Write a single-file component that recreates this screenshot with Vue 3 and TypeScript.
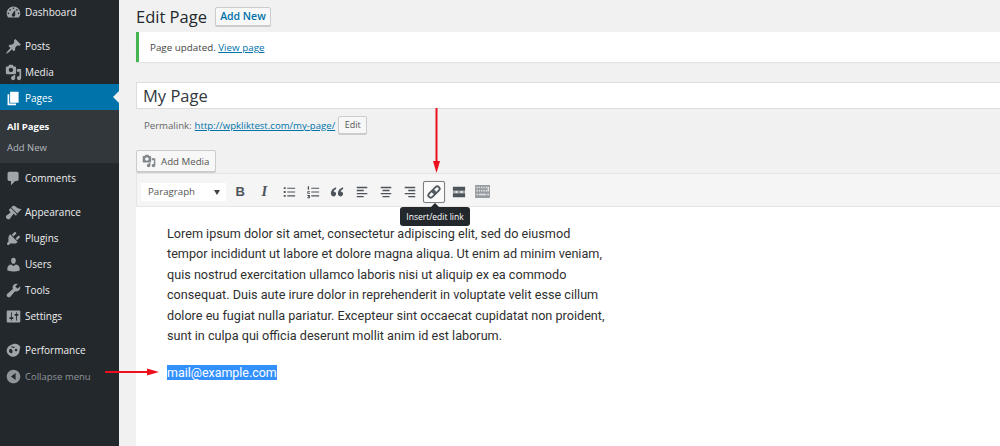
<script setup lang="ts">
interface MenuItem { label: string; path: string }
const P = {
  dash: 'M3.76 16h12.48c1.1-1.37 1.76-3.11 1.76-5 0-4.42-3.58-8-8-8s-8 3.58-8 8c0 1.89.66 3.63 1.76 5zM10 4c.55 0 1 .45 1 1s-.45 1-1 1-1-.45-1-1 .45-1 1-1zM6 6c.55 0 1 .45 1 1s-.45 1-1 1-1-.45-1-1 .45-1 1-1zm8 0c.55 0 1 .45 1 1s-.45 1-1 1-1-.45-1-1 .45-1 1-1zm-5.37 5.55L12 7v6c0 1.1-.9 2-2 2s-2-.9-2-2c0-.57.24-1.08.63-1.45zM4 10c.55 0 1 .45 1 1s-.45 1-1 1-1-.45-1-1 .45-1 1-1zm12 0c.55 0 1 .45 1 1s-.45 1-1 1-1-.45-1-1 .45-1 1-1z',
  post: 'M10.44 3.02l1.82-1.82 6.36 6.35-1.83 1.82c-1.05-.68-2.48-.57-3.41.36l-.75.75c-.92.93-1.04 2.35-.35 3.41l-1.83 1.82-2.41-2.41-2.8 2.79c-.42.42-3.38 2.71-3.8 2.29s1.86-3.39 2.28-3.81l2.79-2.79L4.1 9.36l1.83-1.82c1.05.69 2.48.57 3.4-.36l.75-.75c.93-.92 1.05-2.35.36-3.41z',
  media: 'M13 11V4c0-.55-.45-1-1-1h-1.67L9 1H5L3.67 3H2c-.55 0-1 .45-1 1v7c0 .55.45 1 1 1h10c.55 0 1-.45 1-1zM7 4.5c1.38 0 2.5 1.12 2.5 2.5S8.38 9.5 7 9.5 4.5 8.38 4.5 7 5.62 4.5 7 4.5zM14 6h5v10.5c0 1.38-1.12 2.5-2.5 2.5S14 17.88 14 16.5s1.12-2.5 2.5-2.5c.17 0 .34.02.5.05V9h-3V6zm-4 8.05V13h2v3.5c0 1.38-1.12 2.5-2.5 2.5S7 17.88 7 16.5 8.12 14 9.5 14c.17 0 .34.02.5.05z',
  page: 'M6 15V2h10v13H6zm-1 1h8v2H3V5h2v11z',
  comment: 'M5 2h9c1.1 0 2 .9 2 2v7c0 1.1-.9 2-2 2h-2l-5 5v-5H5c-1.1 0-2-.9-2-2V4c0-1.1.9-2 2-2z',
  appearance: 'M14.48 11.06L7.41 3.99l1.5-1.5c.5-.56 2.3-.47 3.51.32 1.21.8 1.43 1.28 2.91 2.1 1.18.64 2.45 1.26 4.45.85zm-.71.71L6.7 4.7 4.93 6.47c-.39.39-.39 1.02 0 1.41l1.06 1.06c.39.39.39 1.03 0 1.42-.6.6-1.43 1.11-2.21 1.69-.35.26-.7.53-1.01.84C1.43 13.23 1 14 1.03 15.1c.03 1 .62 1.87 1.5 2.44.9.58 1.92.73 2.73.26.95-.55 1.13-1.4 1.81-2.27.31-.4.61-.78.87-1.14.58-.79 1.1-1.6 1.69-2.21.39-.39 1.03-.39 1.42 0l1.06 1.06c.39.39 1.02.39 1.41 0z',
  plugin: 'M13.11 4.36L9.87 7.6 8 5.73l3.24-3.24c.35-.34 1.05-.2 1.56.32.52.51.66 1.21.31 1.55zm-8 1.77l.91-1.12 9.01 9.01-1.19.84c-.71.71-2.63 1.16-3.82 1.16H6.14L4.9 17.26c-.59.59-1.54.59-2.12 0-.59-.58-.59-1.53 0-2.12l1.24-1.24v-3.88c0-1.13.4-3.19 1.09-3.89zm7.26 3.97l3.24-3.24c.34-.35 1.04-.21 1.55.31.52.51.66 1.21.31 1.55l-3.24 3.25z',
  users: 'M10 9.25c-2.27 0-2.73-3.44-2.73-3.44C7 4.02 7.82 2 9.97 2c2.16 0 2.98 2.02 2.71 3.81 0 0-.41 3.44-2.68 3.44zm0 2.57L12.72 10c2.39 0 4.52 2.33 4.52 4.53v2.49s-3.65 1.13-7.24 1.13c-3.65 0-7.24-1.13-7.24-1.13v-2.49c0-2.25 1.94-4.48 4.47-4.48z',
  tools: 'M16.68 9.77c-1.34 1.34-3.3 1.67-4.95.99l-5.41 6.52c-.99.99-2.59.99-3.58 0s-.99-2.59 0-3.57l6.52-5.42c-.68-1.65-.35-3.61.99-4.95 1.28-1.28 3.12-1.62 4.72-1.06l-2.89 2.89 2.82 2.82 2.86-2.87c.53 1.58.18 3.39-1.08 4.65z',
  settings: 'M18 16V4c0-.55-.45-1-1-1H3c-.55 0-1 .45-1 1v12c0 .55.45 1 1 1h14c.55 0 1-.45 1-1zM8 11h1c.55 0 1 .45 1 1s-.45 1-1 1H8v1.5c0 .28-.22.5-.5.5s-.5-.22-.5-.5V13H6c-.55 0-1-.45-1-1s.45-1 1-1h1V5.5c0-.28.22-.5.5-.5s.5.22.5.5V11zm5-2h-1c-.55 0-1-.45-1-1s.45-1 1-1h1V5.5c0-.28.22-.5.5-.5s.5.22.5.5V7h1c.55 0 1 .45 1 1s-.45 1-1 1h-1v5.5c0 .28-.22.5-.5.5s-.5-.22-.5-.5V9z',
  perf: 'M9 2.500c4-1.500 8 .5 9 3.500l-1.500 7c-2 3.500-6 5-9 4S1.500 13 2 9.500c.3-3 3-6 7-7zM6 8c-1 .5-1.500 2.500-1 4l3 1.500c1-1 1-3 .5-4.500zM13 8a1.500 1.500 0 1 0 .01 0zM8 5c-.8.3-1 .8-.5 1.100l3 .9c.8-.1 1.300-.7.7-1.200z',
  collapse: 'M18 10c0-4.420-3.580-8-8-8s-8 3.580-8 8 3.580 8 8 8 8-3.580 8-8zm-5.500-4v8L7 10z',
}
const group1: MenuItem[] = [
  { label: 'Posts', path: P.post },
  { label: 'Media', path: P.media },
]
const group2: MenuItem[] = [
  { label: 'Appearance', path: P.appearance },
  { label: 'Plugins', path: P.plugin },
  { label: 'Users', path: P.users },
  { label: 'Tools', path: P.tools },
  { label: 'Settings', path: P.settings },
]
const lines = [
  'Lorem ipsum dolor sit amet, consectetur adipiscing elit, sed do eiusmod',
  'tempor incididunt ut labore et dolore magna aliqua. Ut enim ad minim veniam,',
  'quis nostrud exercitation ullamco laboris nisi ut aliquip ex ea commodo',
  'consequat. Duis aute irure dolor in reprehenderit in voluptate velit esse cillum',
  'dolore eu fugiat nulla pariatur. Excepteur sint occaecat cupidatat non proident,',
  'sunt in culpa qui officia deserunt mollit anim id est laborum.',
]
</script>

<template>
  <div class="page">
    <nav class="side">
      <a class="item first"><svg class="ico" viewBox="0 0 20 20"><path :d="P.dash" /></svg>Dashboard</a>
      <div class="gap8"></div>
      <a v-for="m in group1" :key="m.label" class="item"><svg class="ico" viewBox="0 0 20 20"><path :d="m.path" /></svg>{{ m.label }}</a>
      <a class="item current"><svg class="ico" viewBox="0 0 20 20"><path :d="P.page" /></svg>Pages<span class="notch"></span></a>
      <div class="sub">
        <a class="sub-on">All Pages</a>
        <a>Add New</a>
      </div>
      <a class="item"><svg class="ico" viewBox="0 0 20 20"><path :d="P.comment" /></svg>Comments</a>
      <div class="gap8"></div>
      <a v-for="m in group2" :key="m.label" class="item"><svg class="ico" viewBox="0 0 20 20"><path :d="m.path" /></svg>{{ m.label }}</a>
      <div class="gap8"></div>
      <a class="item"><svg class="ico" viewBox="0 0 20 20"><path fill-rule="evenodd" :d="P.perf" /></svg>Performance</a>
      <a class="item dim"><svg class="ico" viewBox="0 0 20 20"><path :d="P.collapse" /></svg>Collapse menu</a>
    </nav>

    <main class="main">
      <div class="head">
        <h1>Edit Page</h1>
        <a class="btn add-new">Add New</a>
      </div>
      <div class="notice">Page updated. <a>View page</a></div>
      <div class="title-input">My Page</div>
      <div class="permalink">
        <span>Permalink:</span> <a>http://wpkliktest.com/my-page/</a>
        <span class="btn small">Edit</span>
      </div>
      <div class="btn media">
        <svg class="media-ico" viewBox="0 0 20 20"><path :d="P.media" /></svg>Add Media
      </div>
      <div class="editor">
        <div class="toolbar">
          <div class="select">Paragraph<span class="caret"></span></div>
          <span class="tb bold">B</span>
          <span class="tb ital">I</span>
          <span class="tb">
            <svg viewBox="0 0 16 16"><path d="M2 2.500h2.200v2.200H2zM2 6.900h2.200v2.200H2zM2 11.300h2.200v2.200H2zM6 3h9v1.200H6zM6 7.400h9v1.200H6zM6 11.800h9v1.200H6z" /></svg>
          </span>
          <span class="tb">
            <svg viewBox="0 0 16 16"><path d="M2 1.500h1.500v4H2zM1.500 7h3v1.100h-2v.8h2V10h-3zM1.500 11.500h3V15h-3v-1h2v-.3h-1v-1h1v-.2h-2zM6 3h9v1.200H6zM6 7.400h9v1.200H6zM6 11.800h9v1.200H6z" /></svg>
          </span>
          <span class="tb">
            <svg viewBox="0 0 16 16"><path d="M7 2.500C3.500 3.500 1 6 1 9.500c0 2 1.200 3.500 3 3.500s3-1.300 3-3-1.200-2.800-3-2.700C4.500 6 5.700 5 7 4.500zM15 2.500c-3.500 1-6 3.500-6 7 0 2 1.200 3.500 3 3.500s3-1.300 3-3-1.200-2.800-3-2.700c.5-1.300 1.700-2.300 3-2.800z" /></svg>
          </span>
          <span class="tb">
            <svg viewBox="0 0 16 16"><path d="M2 2h12v1.600H2zM2 5.500h8v1.600H2zM2 9h12v1.600H2zM2 12.500h8v1.600H2z" /></svg>
          </span>
          <span class="tb">
            <svg viewBox="0 0 16 16"><path d="M2 2h12v1.600H2zM4 5.500h8v1.600H4zM2 9h12v1.600H2zM4 12.500h8v1.600H4z" /></svg>
          </span>
          <span class="tb">
            <svg viewBox="0 0 16 16"><path d="M2 2h12v1.600H2zM6 5.500h8v1.600H6zM2 9h12v1.600H2zM6 12.500h8v1.600H6z" /></svg>
          </span>
          <span class="tb link-btn">
            <svg viewBox="0 0 16 16" class="link-ico"><g fill="none" stroke="#50575e" stroke-width="1.800" transform="rotate(-45 8 8)"><rect x="1" y="5.600" width="8" height="4.800" rx="2.400" /><rect x="7" y="5.600" width="8" height="4.800" rx="2.400" /></g></svg>
          </span>
          <span class="tb">
            <svg viewBox="0 0 16 16"><path d="M1 2h14v4.500H1zM1 7.300h3v1.300H1zM6 7.300h4v1.300H6zM12 7.300h3v1.300h-3zM1 9.500h14V14H1z" /></svg>
          </span>
          <span class="tb sink">
            <svg viewBox="0 0 16 14"><path fill="#979ca1" d="M0 0h16v14H0z" /><path fill="#e2e2e2" d="M1.500 2h1.500v1.500H1.500zM4 2h1.500v1.500H4zM6.500 2H8v1.500H6.500zM9 2h1.500v1.500H9zM11.500 2H13v1.500h-1.500zM1.500 5.500h1.500V7H1.500zM4 5.500h1.500V7H4zM6.500 5.500H8V7H6.500zM9 5.500h1.500V7H9zM11.500 5.500H13V7h-1.500zM13.500 2H15v5h-1.500zM1.500 9.500H3V11H1.500zM4 9.500h8V11H4zM13 9.500h2V11h-2z" /></svg>
          </span>
        </div>
        <div class="content">
          <p class="lorem"><span v-for="l in lines" :key="l" class="line">{{ l }}</span></p>
          <p class="mail"><span>mail@example.com</span></p>
        </div>
      </div>
    </main>

    <!-- overlays -->
    <div class="tooltip">Insert/edit link</div>
    <svg class="annot" width="1000" height="446" viewBox="0 0 1000 446">
      <path d="M436.500 108V162" stroke="#ee0f1c" stroke-width="2" />
      <path d="M433 161h7l-3.500 12z" fill="#ee0f1c" />
      <path d="M105 372H148" stroke="#ee0f1c" stroke-width="2" />
      <path d="M147 368.500v7l12-3.500z" fill="#ee0f1c" />
    </svg>
  </div>
</template>

<style>
html, body { margin: 0; padding: 0; background: #f1f1f1; }
</style>

<style scoped>
.page {
  position: relative;
  display: flex;
  width: 1000px;
  height: 446px;
  overflow: hidden;
  background: #f1f1f1;
  font-family: "Open Sans", sans-serif;
  color: #444;
}
.side {
  flex: 0 0 119px;
  background: #23282d;
  color: #eee;
  font-size: 10px;
  display: flex;
  flex-direction: column;
}
.item {
  position: relative;
  display: flex;
  align-items: center;
  box-sizing: border-box;
  height: 26px;
  flex: none;
  padding: 2px 0 0 5px;
}
.first { margin-top: -2px; }
.gap8 { height: 8px; flex: none; }
.ico {
  width: 17px;
  height: 17px;
  margin-right: 3px;
  fill: #a0a5aa;
  flex: none;
}
.current { background: #0073aa; color: #fff; }
.current .ico { fill: #fff; }
.notch {
  position: absolute;
  right: 0;
  top: 7px;
  border: 6px solid transparent;
  border-right-color: #f1f1f1;
}
.sub {
  background: #32373c;
  height: 53px;
  padding: 9px 0 0 7px;
  box-sizing: border-box;
  display: flex;
  flex-direction: column;
  gap: 5px;
  color: #b4b9be;
  font-size: 9.500px;
  line-height: 16px;
  margin-bottom: 1px;
  flex: none;
}
.sub-on { color: #fff; font-weight: 700; }
.dim { color: #8f9499; font-size: 9.500px; }
.dim .ico { fill: #8f9499; }
.main {
  flex: 1;
  min-width: 0;
  padding-left: 17px;
  display: flex;
  flex-direction: column;
}
.head {
  display: flex;
  align-items: center;
  height: 32px;
  gap: 8px;
}
h1 {
  margin: 0;
  font-size: 16.500px;
  font-weight: 400;
  color: #23282d;
}
.btn {
  box-sizing: border-box;
  background: #f7f7f7;
  border: 1px solid #ccc;
  border-radius: 2px;
  box-shadow: 0 1px 0 #ccc;
}
.add-new {
  width: 56px;
  height: 19px;
  line-height: 17px;
  text-align: center;
  font-size: 10.500px;
  font-weight: 600;
  color: #0073aa;
  background: #f8f8f8;
}
.notice {
  height: 30px;
  box-sizing: border-box;
  background: #fff;
  border-left: 3px solid #46b450;
  box-shadow: 0 1px 1px rgba(0, 0, 0, 0.06);
  padding-left: 11px;
  font-size: 9.800px;
  line-height: 31px;
  color: #444;
}
.notice a, .permalink a { color: #0073aa; text-decoration: underline; }
.title-input {
  margin-top: 20px;
  height: 27px;
  box-sizing: border-box;
  background: #fff;
  border: 1px solid #ddd;
  border-right: 0;
  padding-left: 6px;
  font-size: 16.500px;
  line-height: 25px;
  color: #32373c;
}
.permalink {
  display: flex;
  align-items: center;
  height: 18px;
  margin-top: 7px;
  padding-left: 8px;
  font-size: 9.600px;
  color: #666;
  gap: 3px;
  white-space: pre;
}
.small {
  margin-left: 0;
  width: 29px;
  height: 18px;
  line-height: 16px;
  text-align: center;
  font-size: 9px;
  color: #555;
}
.media {
  margin-top: 16px;
  width: 80px;
  height: 22px;
  display: flex;
  align-items: center;
  padding-left: 5px;
  font-size: 9.700px;
  color: #555;
}
.media-ico {
  width: 14px;
  height: 14px;
  fill: #82878c;
  margin-right: 5px;
  flex: none;
}
.editor {
  margin-top: 1px;
  flex: 1;
  display: flex;
  flex-direction: column;
}
.toolbar {
  height: 34px;
  flex: none;
  box-sizing: border-box;
  background: #f5f5f5;
  border: 1px solid #e5e5e5;
  border-right: 0;
  display: flex;
  align-items: center;
  padding: 3px 0 0 4px;
}
.select {
  position: relative;
  box-sizing: border-box;
  width: 85px;
  height: 18px;
  margin-right: 2px;
  background: #fff;
  font-size: 9.700px;
  line-height: 18px;
  padding-left: 7px;
  color: #555;
}
.caret {
  position: absolute;
  right: 6px;
  top: 7px;
  border: 3.500px solid transparent;
  border-top: 5px solid #3d4349;
  border-bottom: 0;
}
.tb {
  width: 24.300px;
  height: 22px;
  flex: none;
  display: flex;
  align-items: center;
  justify-content: center;
  box-sizing: border-box;
  color: #4d545b;
}
.tb svg { width: 14px; height: 14px; fill: #4d545b; }
.tb.sink svg { width: 15px; height: 13px; }
.bold { font: 700 13px "Liberation Sans", sans-serif; }
.ital { font: italic 700 14.500px "Liberation Serif", serif; }
.link-btn {
  width: 22px;
  margin: 0 1px;
  border: 1px solid #7a7f84;
  border-radius: 2px;
  background: #fafafa;
  box-shadow: 0 0 1px rgba(0,0,0,.3);
}
.tb .link-ico { width: 16px; height: 16px; fill: none; }
.content {
  flex: 1;
  background: #fff;
  padding: 17px 0 0 31px;
  font-family: Roboto, sans-serif;
  font-size: 12.650px;
  line-height: 20.400px;
  color: #2f2f2f;
}
.lorem, .mail { margin: 0; }
.line { display: block; white-space: nowrap; }
.mail { margin-top: 17px; font-size: 12.450px; }
.mail span { background: #3390ff; color: #fff; display: inline-block; line-height: 15px; }
.tooltip {
  position: absolute;
  left: 400px;
  top: 207px;
  width: 70px;
  height: 19px;
  background: #23282d;
  color: #fff;
  border-radius: 3px;
  font-size: 8.500px;
  line-height: 19px;
  text-align: center;
  white-space: nowrap;
}
.tooltip::before {
  content: "";
  position: absolute;
  left: 31px;
  top: -4px;
  border: 4px solid transparent;
  border-top: 0;
  border-bottom-color: #23282d;
}
.annot { position: absolute; left: 0; top: 0; pointer-events: none; }
</style>
